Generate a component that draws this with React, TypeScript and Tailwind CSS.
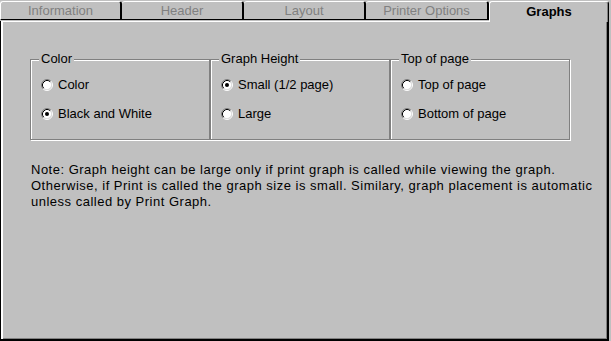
const tabs = [
  { label: 'Information', width: 'w-[122px]' },
  { label: 'Header', width: 'w-[122px]' },
  { label: 'Layout', width: 'w-[122px]' },
  { label: 'Printer Options', width: 'w-[123px]' },
];

const groups = [
  { title: 'Color', options: ['Color', 'Black and White'], checked: 1 },
  { title: 'Graph Height', options: ['Small (1/2 page)', 'Large'], checked: 0 },
  { title: 'Top of page', options: ['Top of page', 'Bottom of page'], checked: -1 },
];

function Radio({ checked }: { checked: boolean }) {
  return (
    <svg width="12" height="12" viewBox="0 0 12 12" className="shrink-0">
      <circle cx="6" cy="6" r="4.5" fill="#fff" />
      <path d="M2.11 9.89 A5.5 5.5 0 0 1 9.89 2.11" fill="none" stroke="#808080" />
      <path d="M9.89 2.11 A5.5 5.5 0 0 1 2.11 9.89" fill="none" stroke="#fff" />
      <path d="M2.82 9.18 A4.5 4.5 0 0 1 9.18 2.82" fill="none" stroke="#000" />
      <path d="M9.18 2.82 A4.5 4.5 0 0 1 2.82 9.18" fill="none" stroke="#dfdfdf" />
      {checked && <circle cx="6" cy="6" r="2" fill="#000" />}
    </svg>
  );
}

export default function App() {
  return (
    <div className="w-[611px] h-[341px] bg-[#c0c0c0] text-[13px] leading-4 text-black font-['Liberation_Sans',Arial,sans-serif] overflow-hidden">
      <div className="w-[609px]">
        {/* tab strip */}
        <div className="flex h-[21px] items-start">
          {tabs.map((tab) => (
            <div
              key={tab.label}
              className={`${tab.width} mt-[1px] h-[19px] flex items-center justify-center border-t border-white border-b border-b-black border-r-2 border-r-black rounded-tl-[3px] rounded-tr-[3px] text-[#808080] first:border-l first:border-l-white`}
            >
              {tab.label}
            </div>
          ))}
          <div className="relative z-10 w-[120px] mt-[1px] h-[21px] flex items-center justify-center pb-[1px] bg-[#c0c0c0] border-t border-l border-white border-r border-r-black shadow-[inset_-1px_0_0_#808080] rounded-tl-[3px] rounded-tr-[3px] font-bold">
            Graphs
          </div>
        </div>

        {/* panel */}
        <div className="h-[320px] border-l border-l-black border-r-2 border-r-black border-b-2 border-b-black shadow-[inset_2px_1px_0_#fff,inset_-1px_-1px_0_#808080] pt-[38px] pl-[29px]">
          <div className="flex">
            {groups.map((group) => (
              <div
                key={group.title}
                className="relative w-[180px] h-[81px] border border-[#808080] shadow-[inset_1px_1px_0_#fff,1px_1px_0_#fff] pt-[17px] pl-[10px] flex flex-col gap-[13px]"
              >
                <span className="absolute -top-[9px] left-[8px] px-[2px] bg-[#c0c0c0]">
                  {group.title}
                </span>
                {group.options.map((opt, i) => (
                  <div key={opt} className="flex items-center gap-[5px] h-4">
                    <Radio checked={group.checked === i} />
                    <span>{opt}</span>
                  </div>
                ))}
              </div>
            ))}
          </div>

          <p className="mt-[22px] ml-[1px] tracking-[0.5px]">
            Note: Graph height can be large only if print graph is called while viewing the graph.
            <br />
            Otherwise, if Print is called the graph size is small. Similary, graph placement is automatic
            <br />
            unless called by Print Graph.
          </p>
        </div>
      </div>
    </div>
  );
}
